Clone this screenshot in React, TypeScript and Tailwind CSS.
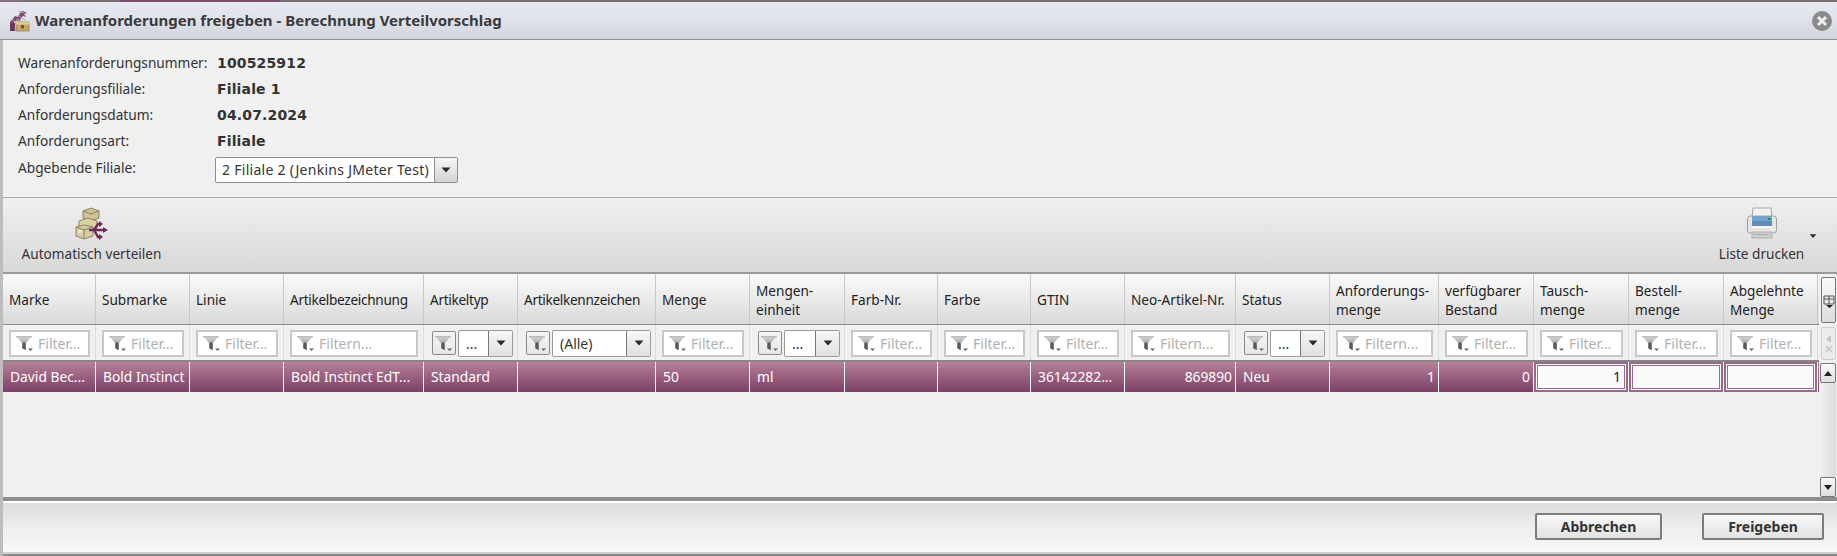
import React from "react";

type Col = { h: string[]; w: string; ht?: string; f: "text" | "combo" | "none"; ph?: string; combo?: string; cell?: string; right?: boolean; edit?: boolean };

const cols: Col[] = [
  { h: ["Marke"], w: "w-[93px]", f: "text", ph: "Filter...", cell: "David Bec..." },
  { h: ["Submarke"], w: "w-[94px]", f: "text", ph: "Filter...", cell: "Bold Instinct" },
  { h: ["Linie"], w: "w-[94px]", f: "text", ph: "Filter..." },
  { h: ["Artikelbezeichnung"], w: "w-[140px]", ht: "tracking-[-0.3px]", f: "text", ph: "Filtern...", cell: "Bold Instinct EdT..." },
  { h: ["Artikeltyp"], w: "w-[94px]", ht: "tracking-[-0.3px]", f: "combo", combo: "...", cell: "Standard" },
  { h: ["Artikelkennzeichen"], w: "w-[138px]", ht: "tracking-[-0.3px]", f: "combo", combo: "(Alle)" },
  { h: ["Menge"], w: "w-[94px]", f: "text", ph: "Filter...", cell: "50" },
  { h: ["Mengen-", "einheit"], w: "w-[95px]", f: "combo", combo: "...", cell: "ml" },
  { h: ["Farb-Nr."], w: "w-[93px]", f: "text", ph: "Filter..." },
  { h: ["Farbe"], w: "w-[93px]", f: "text", ph: "Filter..." },
  { h: ["GTIN"], w: "w-[94px]", f: "text", ph: "Filter...", cell: "36142282..." },
  { h: ["Neo-Artikel-Nr."], w: "w-[111px]", f: "text", ph: "Filtern...", cell: "869890", right: true },
  { h: ["Status"], w: "w-[94px]", f: "combo", combo: "...", cell: "Neu" },
  { h: ["Anforderungs-", "menge"], w: "w-[109px]", f: "text", ph: "Filtern...", cell: "1", right: true },
  { h: ["verfügbarer", "Bestand"], w: "w-[95px]", f: "text", ph: "Filter...", cell: "0", right: true },
  { h: ["Tausch-", "menge"], w: "w-[95px]", f: "text", ph: "Filter...", cell: "1", right: true, edit: true },
  { h: ["Bestell-", "menge"], w: "w-[95px]", f: "text", ph: "Filter...", edit: true },
  { h: ["Abgelehnte", "Menge"], w: "w-[94px]", f: "text", ph: "Filter...", edit: true },
];

function Funnel() {
  return (
    <svg width="20" height="18" viewBox="0 0 20 18" className="shrink-0">
      <defs>
        <linearGradient id="fg" x1="0" y1="0" x2="0" y2="1">
          <stop offset="0" stopColor="#d8d8d8" />
          <stop offset="1" stopColor="#808080" />
        </linearGradient>
      </defs>
      <path d="M1 2h16l-6 7v7l-4-2V9z" fill="url(#fg)" />
      <path d="M1 2h16v1.4H1z" fill="#bdbdbd" />
      <path d="M7.5 8.5h3v7.5l-3-1.5z" fill="#5a5a5a" />
      <path d="M13 14.5h5l-2.5 2.5z" fill="#666" />
    </svg>
  );
}

function Caret({ className = "" }: { className?: string }) {
  return (
    <svg width="10" height="6" viewBox="0 0 10 6" className={className}>
      <path d="M0.5 0.5h9L5 5.5z" fill="#2c2c2c" />
    </svg>
  );
}

function TitleIcon() {
  return (
    <svg width="22" height="22" viewBox="0 0 22 22" className="shrink-0">
      <path d="M2 12l5-6 3 1 2-4 3-2 4 2-3 1 2 3-3-1-2 2-1 3H6v9H2z" fill="#7c4a72" />
      <path d="M4 9l3 3 3-3 2 3" stroke="#c9b4c6" strokeWidth="1" fill="none" />
      <path d="M11 1l7 3M10 5l7 5" stroke="#b79cb2" strokeWidth="1" fill="none" />
      <path d="M2 13h5v8H2z" fill="#6d3763" />
      <rect x="8" y="12" width="13" height="9" fill="#c4a96c" stroke="#8e7a4a" strokeWidth="0.7" />
      <rect x="8" y="12" width="13" height="2.5" fill="#dbc894" />
      <rect x="13" y="15" width="3" height="3.5" fill="#6b5a30" />
    </svg>
  );
}

function DistributeIcon() {
  return (
    <svg width="34" height="34" viewBox="0 0 34 34">
      <path d="M8 4l8-3 8 3v7l-8 3-8-3z" fill="#cfc397" stroke="#8e8458" />
      <path d="M8 4l8 3 8-3" fill="none" stroke="#8e8458" />
      <path d="M4 14l9-3 9 3v7l-9 3-9-3z" fill="#dacfa6" stroke="#8e8458" />
      <path d="M1 20l8-2 9 2v9l-9 3-8-3z" fill="#d8cca2" stroke="#8e8458" />
      <path d="M1 20l8 3 9-3M9 23v9" fill="none" stroke="#8e8458" />
      <rect x="3" y="23" width="4" height="3" fill="#efe9d0" />
      <path d="M14 23h5l4-6h3M19 23l4 7h3M14 23h16" fill="none" stroke="#70285c" strokeWidth="2.4" />
      <path d="M28 20l5 3-5 3zM24 14l4 3-4 3zM24 27l4 3-4 3z" fill="#70285c" />
    </svg>
  );
}

function PrinterIcon() {
  return (
    <svg width="32" height="32" viewBox="0 0 32 32">
      <path d="M7 1h18l1 10H6z" fill="#f2f2f2" stroke="#a8a8a8" />
      <rect x="1.5" y="9" width="29" height="17" rx="3" fill="#e6e6e6" stroke="#a0a0a0" />
      <rect x="6" y="9" width="20" height="12" fill="#5e8cbe" />
      <rect x="6" y="9" width="20" height="5" fill="#7ba3cf" />
      <rect x="6" y="19" width="20" height="2" fill="#f5f5f5" />
      <rect x="22" y="11" width="3" height="2" fill="#1d9a2e" />
      <rect x="6" y="25" width="20" height="6" fill="#cfcfcf" stroke="#b0b0b0" />
      <path d="M8 27.5h16" stroke="#9a9a9a" strokeDasharray="1.5 1" />
    </svg>
  );
}

function FilterCell({ c }: { c: Col }) {
  if (c.f === "combo") {
    return (
      <div className={`${c.w} shrink-0 h-full flex items-center pt-[1px] pl-[8px] pr-[4px] gap-[2px] border-r border-[#dcdcdc]`}>
        <div className="w-[24px] h-[24px] shrink-0 flex items-center justify-center rounded-[2px] border border-[#8a8a8a] bg-gradient-to-b from-[#f6f6f6] to-[#e6e6e6] overflow-hidden">
          <Funnel />
        </div>
        <div className="flex-1 min-w-0 h-[27px] flex rounded-[2px] border border-[#9a9a9a] bg-white">
          <div className="flex-1 min-w-0 pl-[7px] leading-[25px] text-[14px] text-[#333] truncate">{c.combo}</div>
          <div className="w-[24px] shrink-0 flex items-center justify-center border-l border-[#777] bg-gradient-to-b from-[#f6f6f6] to-[#e0e0e0]">
            <Caret />
          </div>
        </div>
      </div>
    );
  }
  return (
    <div className={`${c.w} shrink-0 h-full flex items-center pt-[1px] pl-[6px] pr-[5px] border-r border-[#dcdcdc]`}>
      <div className="w-full h-[27px] flex items-center gap-[3px] pl-[4px] border-2 border-[#c8c8c8] bg-white overflow-hidden">
        <Funnel />
        <span className="text-[14px] text-[#b0b0b0] whitespace-nowrap">{c.ph}</span>
      </div>
    </div>
  );
}

function DataCell({ c }: { c: Col }) {
  if (c.edit) {
    return (
      <div className={`${c.w} shrink-0 h-full p-[2px] bg-[#9a6888] border-r border-white`}>
        <div className="h-full border border-white">
          <div className="h-full border border-[#9a6888] bg-[#fafafa] text-right pr-[3px] text-[14px] leading-[22px] text-[#222]">{c.cell}</div>
        </div>
      </div>
    );
  }
  return (
    <div className={`${c.w} shrink-0 h-full flex items-center ${c.right ? "justify-end pr-[3px]" : "pl-[7px]"} border-r border-white text-[13.8px] text-white whitespace-nowrap overflow-hidden`}>
      {c.cell}
    </div>
  );
}

function Btn({ w, children }: { w: string; children: React.ReactNode }) {
  return (
    <div className={`${w} h-[27px] flex items-center justify-center rounded-[2px] border-2 border-[#7c7c7c] bg-gradient-to-b from-[#f8f8f8] to-[#e2e2e2] text-[14px] font-bold text-[#333]`}>
      {children}
    </div>
  );
}

const info = [
  ["Warenanforderungsnummer:", "100525912"],
  ["Anforderungsfiliale:", "Filiale 1"],
  ["Anforderungsdatum:", "04.07.2024"],
  ["Anforderungsart:", "Filiale"],
];

export default function App() {
  return (
    <div className="w-[1837px] h-[556px] overflow-hidden flex flex-col bg-[#f0f0f0] text-[#333] font-['Noto_Sans',sans-serif]">
      <div className="h-[2px] shrink-0 flex bg-[#77726f]">
        <div className="w-[20px] bg-[#8c6a80]" />
        <div className="w-[100px]" />
        <div className="w-[160px] bg-[#7e4a6c]" />
      </div>
      <div className="h-[38px] shrink-0 flex items-center pl-[8px] pr-[5px] border-b border-[#8f8f8f] bg-gradient-to-b from-[#e6e9f1] via-[#e0e2ea] to-[#d2d4dd]">
        <TitleIcon />
        <div className="ml-[5px] text-[15px] font-bold text-[#3a3a3a]">Warenanforderungen freigeben - Berechnung Verteilvorschlag</div>
        <div className="ml-auto w-[20px] h-[20px] rounded-full bg-[#8a8a8a] flex items-center justify-center">
          <svg width="12" height="12" viewBox="0 0 12 12">
            <path d="M2 2l8 8M10 2l-8 8" stroke="#f0f0f0" strokeWidth="3" />
          </svg>
        </div>
      </div>
      <div className="flex-1 min-h-0 flex flex-col border-l-[3px] border-[#bdbdbd]">
        <div className="h-[157px] shrink-0 pt-[10px] pl-[15px]">
          {info.map(([l, v]) => (
            <div key={l} className="h-[26px] flex items-center">
              <div className="w-[199px] shrink-0 text-[13.7px]">{l}</div>
              <div className="text-[14px] font-bold tracking-[0.15px] font-['DejaVu_Sans',sans-serif]">{v}</div>
            </div>
          ))}
          <div className="mt-[3px] h-[26px] flex items-center">
            <div className="w-[197px] shrink-0 text-[13.7px] -mt-[3px]">Abgebende Filiale:</div>
            <div className="w-[243px] h-[26px] flex border border-[#8d8d8d] rounded-[2px] bg-white">
              <div className="flex-1 pl-[6px] text-[14px] tracking-[0.28px] leading-[24px] whitespace-nowrap overflow-hidden">2 Filiale 2 (Jenkins JMeter Test)</div>
              <div className="w-[23px] shrink-0 flex items-center justify-center border-l border-[#8d8d8d] bg-gradient-to-b from-[#f6f6f6] to-[#d4d4d4]">
                <Caret />
              </div>
            </div>
          </div>
        </div>
        <div className="h-[77px] shrink-0 border-t border-b-2 border-t-[#a8a8a8] border-b-[#9a9a9a] flex justify-between bg-gradient-to-b from-[#f0f0f0] to-[#d8d8d8]">
          <div className="ml-[19px] w-[139px] flex flex-col items-center pt-[9px]">
            <DistributeIcon />
            <div className="mt-[3px] text-[13.6px] whitespace-nowrap">Automatisch verteilen</div>
          </div>
          <div className="mr-[33px] w-[85px] relative flex flex-col items-center pt-[9px]">
            <PrinterIcon />
            <div className="mt-[5px] text-[13.6px] whitespace-nowrap">Liste drucken</div>
            <Caret className="absolute -right-[14px] top-[35px] scale-75" />
          </div>
        </div>
        <div className="flex-1 min-h-0 flex flex-col">
          <div className="h-[223px] shrink-0 flex">
            <div className="w-[1816px] shrink-0 flex flex-col">
              <div className="h-[51px] shrink-0 flex border-b border-[#8c8c8c] bg-gradient-to-b from-[#fbfbfb] to-[#d9d9d9]">
                {cols.map((c) => (
                  <div key={c.h[0]} className={`${c.w} ${c.ht ?? ""} shrink-0 h-full flex flex-col justify-center pl-[6px] pt-[1px] border-r border-[#c8c8c8] text-[13.6px] leading-[19px] text-[#222] whitespace-nowrap overflow-hidden`}>
                    {c.h.map((t) => (
                      <div key={t}>{t}</div>
                    ))}
                  </div>
                ))}
              </div>
              <div className="h-[37px] shrink-0 flex border-b-2 border-[#858585] bg-[#f0f0f0]">
                {cols.map((c) => (
                  <FilterCell key={c.h[0]} c={c} />
                ))}
              </div>
              <div className="h-[30px] shrink-0 flex bg-gradient-to-b from-[#b58099] to-[#7d4066]">
                {cols.map((c) => (
                  <DataCell key={c.h[0]} c={c} />
                ))}
              </div>
            </div>
            <div className="flex-1 flex flex-col pl-[2px] pr-[1px]">
              <div className="h-[46px] mt-[3px] rounded-[2px] border border-[#777] bg-gradient-to-b from-[#fafafa] to-[#dcdcdc] flex items-end justify-center pb-[13px]">
                <svg width="12" height="14" viewBox="0 0 12 14">
                  <path d="M1 1h10v8H1zM1 4h10M6 1v8" fill="none" stroke="#555" />
                  <path d="M3 10h7l-3.5 3z" fill="#222" />
                </svg>
              </div>
              <div className="h-[33px] mt-[4px] rounded-[2px] border border-[#d0d0d0] bg-[#ececec] flex flex-col items-center justify-center gap-[2px]">
                <svg width="8" height="8" viewBox="0 0 8 8"><path d="M6 0v8L1 4z" fill="#c4c4c4" /></svg>
                <svg width="8" height="8" viewBox="0 0 8 8"><path d="M1 1l6 6M7 1L1 7" stroke="#c4c4c4" strokeWidth="1.5" /></svg>
              </div>
              <div className="h-[20px] mt-[3px] -ml-[1px] rounded-[2px] border border-[#777] bg-gradient-to-b from-[#fafafa] to-[#dedede] flex items-center justify-center shrink-0">
                <svg width="8" height="5" viewBox="0 0 8 5"><path d="M4 0l4 5H0z" fill="#222" /></svg>
              </div>
              <div className="flex-1 -ml-[1px] bg-gradient-to-r from-[#f0f0f0] to-[#dcdcdc]" />
              <div className="h-[20px] -ml-[1px] rounded-[2px] border border-[#777] bg-gradient-to-b from-[#fafafa] to-[#dedede] flex items-center justify-center shrink-0">
                <svg width="8" height="5" viewBox="0 0 8 5"><path d="M4 5l4-5H0z" fill="#222" /></svg>
              </div>
            </div>
          </div>
          <div className="h-[55px] shrink-0 border-t-[4px] border-[#8e8e8e] flex flex-col">
            <div className="h-[2px] shrink-0 bg-white" />
            <div className="flex-1 flex items-center justify-end gap-[40px] pr-[13px] pb-[2px] bg-gradient-to-b from-[#dcdcdc] via-[#eeeeee] to-[#f8f8f8]">
              <Btn w="w-[127px]">Abbrechen</Btn>
              <Btn w="w-[122px]">Freigeben</Btn>
            </div>
          </div>
          <div className="h-[2px] shrink-0 bg-[#cfcfcf]" />
          <div className="h-[2px] shrink-0 bg-[#8a8a8a]" />
        </div>
      </div>
    </div>
  );
}
